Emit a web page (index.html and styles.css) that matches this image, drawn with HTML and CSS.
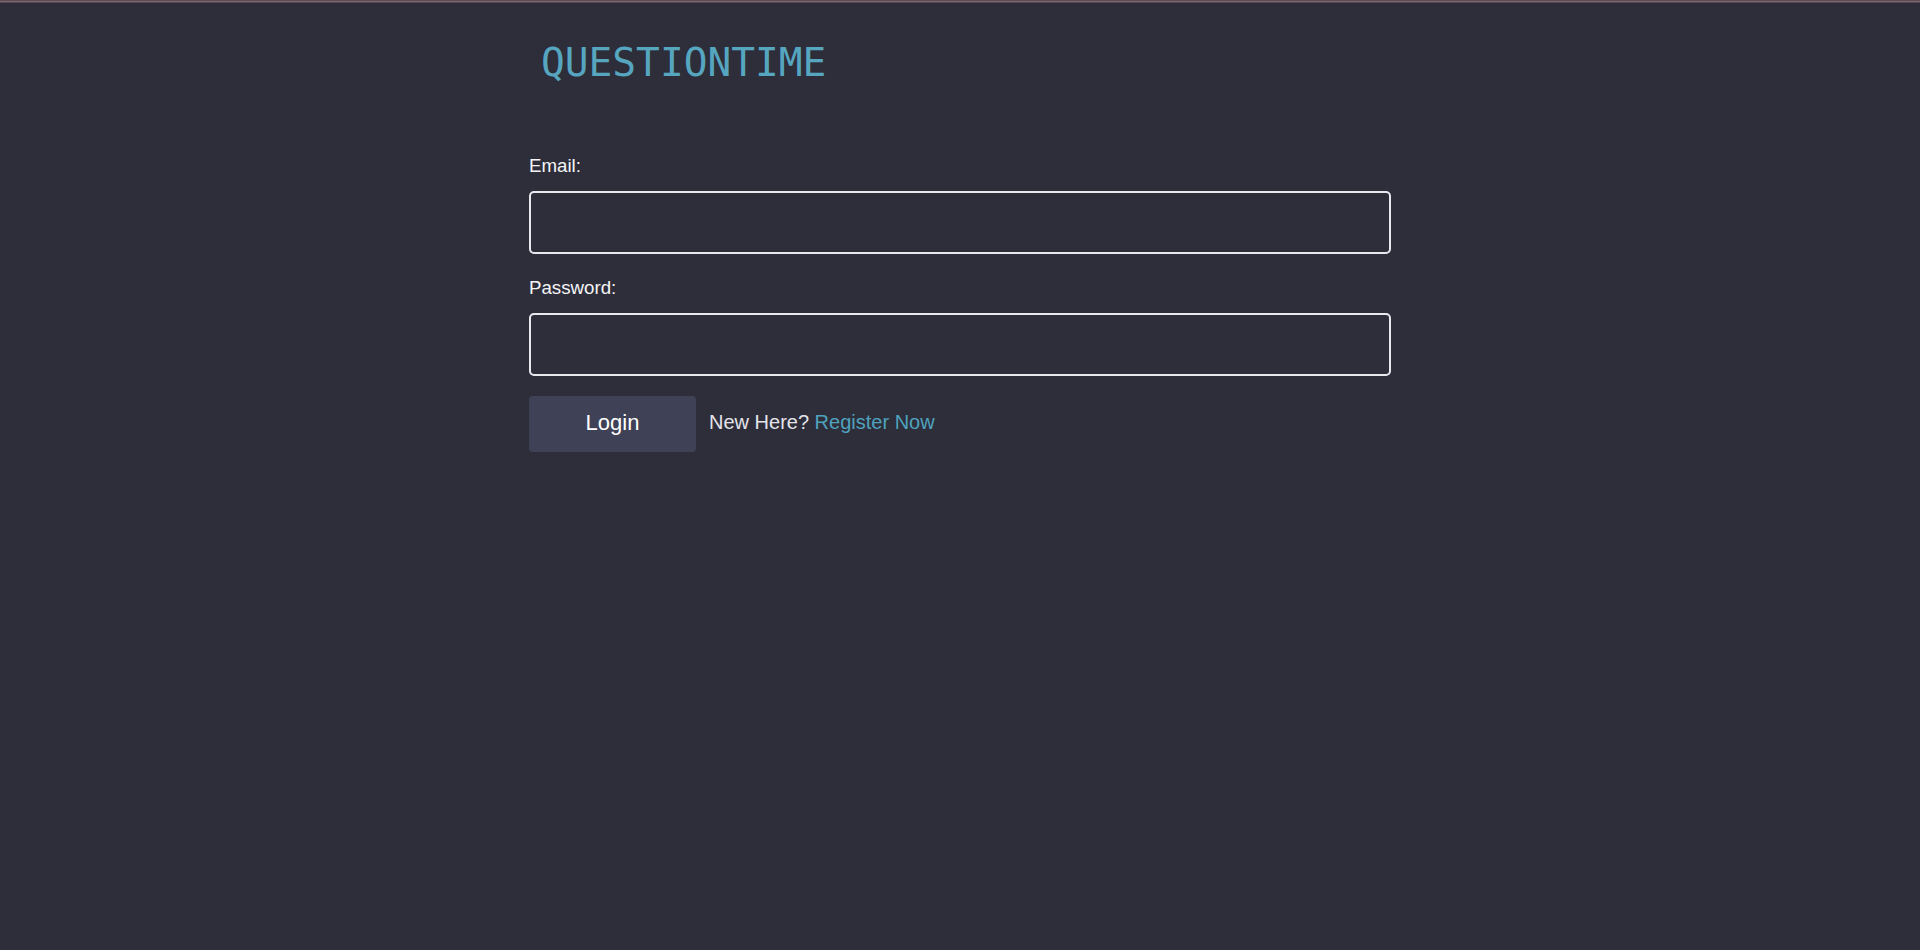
FILE: index.html
```html
<!DOCTYPE html>
<html lang="en">
<head>
<meta charset="utf-8">
<title>QuestionTime - Login</title>
<link rel="stylesheet" href="styles.css">
</head>
<body>
<div class="topbar"></div>
<main class="page">
  <h1 class="brand">QUESTIONTIME</h1>
  <form class="login-form">
    <label class="field-label" for="email">Email:</label>
    <input class="field-input" id="email" type="email">
    <label class="field-label" for="password">Password:</label>
    <input class="field-input" id="password" type="password">
    <div class="actions">
      <button class="login-btn" type="button">Login</button>
      <span class="register-text">New Here? <a class="register-link" href="#">Register Now</a></span>
    </div>
  </form>
</main>
</body>
</html>
```

FILE: styles.css
```css
html, body {
  margin: 0;
  padding: 0;
  height: 100%;
}

body {
  background: #2e2e3a;
  font-family: "Liberation Sans", Arial, sans-serif;
  color: #f2f2f5;
}

.topbar {
  height: 3px;
  background: linear-gradient(#5a4b54 0 1px, #7d6872 1px 2px, #54464f 2px 3px);
}

.page {
  width: 862px;
  margin: 0 auto;
  padding-top: 36px;
}

.brand {
  margin: 0;
  padding-left: 12px;
  font-family: "DejaVu Sans Mono", monospace;
  font-weight: normal;
  font-size: 39.5px;
  line-height: 46px;
  color: #56a6c0;
}

.login-form {
  margin-top: 70px;
  display: flex;
  flex-direction: column;
}

.field-label {
  display: block;
  font-size: 18.7px;
  line-height: 21px;
  margin-bottom: 15px;
  color: #f4f4f6;
}

.field-input {
  box-sizing: border-box;
  width: 100%;
  height: 63px;
  margin: 0 0 23px;
  border: 2px solid #e8e8ee;
  border-radius: 5px;
  background: #2e2e3a;
  color: #f4f4f6;
  font-size: 18px;
  padding: 0 12px;
  outline: none;
}

.field-input:last-of-type {
  margin-bottom: 20px;
}

.actions {
  display: flex;
  align-items: center;
}

.login-btn {
  width: 167px;
  height: 56px;
  border: none;
  border-radius: 4px;
  background: #3f4156;
  color: #ffffff;
  font-family: "Liberation Sans", Arial, sans-serif;
  font-size: 22px;
  line-height: 24px;
  padding: 0 0 2px;
  cursor: pointer;
}

.register-text {
  margin-left: 13px;
  margin-top: -3px;
  font-size: 20px;
  color: #e4e4ea;
}

.register-link {
  color: #4fa2bd;
  text-decoration: none;
}
```
